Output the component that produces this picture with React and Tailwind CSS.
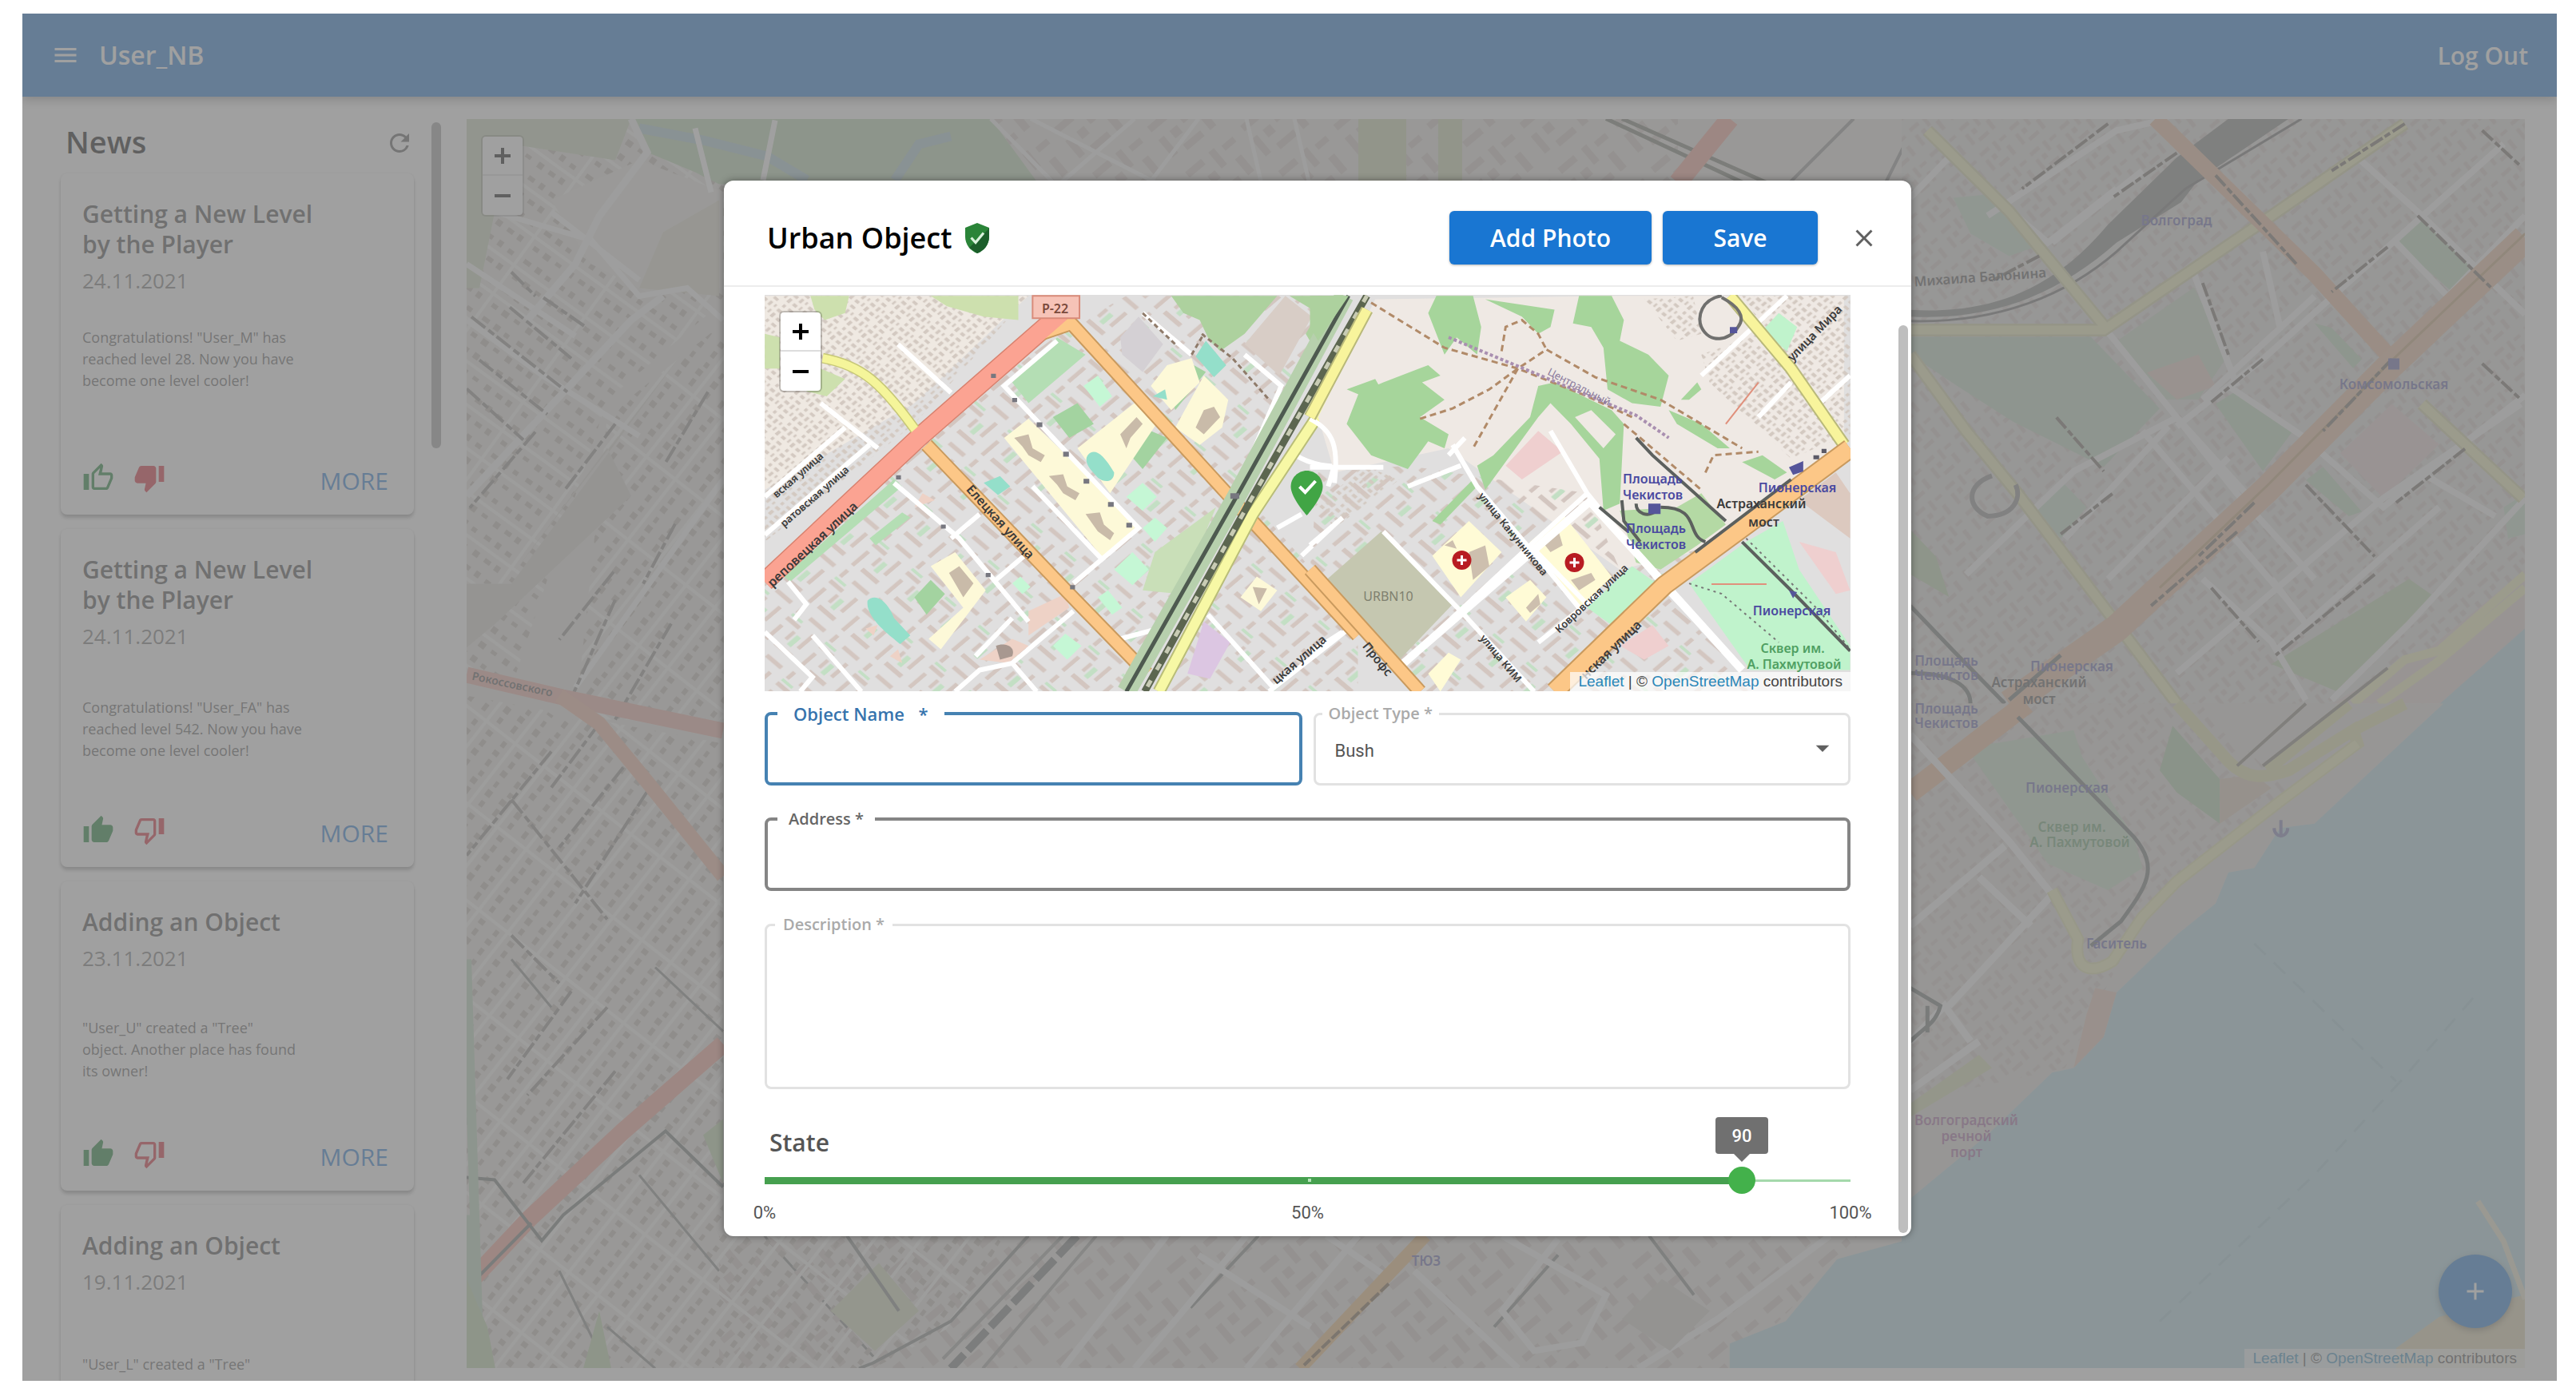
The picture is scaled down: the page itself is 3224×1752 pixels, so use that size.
import React, { useState } from 'react';
import {
  MdMenu,
  MdRefresh,
  MdClose,
  MdThumbUp,
  MdThumbDown,
  MdOutlineThumbUp,
  MdOutlineThumbDown,
  MdAdd,
  MdArrowDropDown,
} from 'react-icons/md';

const news = [
  {
    id: 1,
    title: 'Getting a New Level by the Player',
    date: '24.11.2021',
    text: 'Congratulations! "User_M" has\nreached level 28. Now you have\nbecome one level cooler!',
    vote: 'down',
    spacing: 'mt-[38px] mb-[86px]',
  },
  {
    id: 2,
    title: 'Getting a New Level by the Player',
    date: '24.11.2021',
    text: 'Congratulations! "User_FA" has\nreached level 542. Now you have\nbecome one level cooler!',
    vote: 'up',
    spacing: 'mt-14 mb-16',
  },
  {
    id: 3,
    title: 'Adding an Object',
    date: '23.11.2021',
    text: '"User_U" created a "Tree"\nobject. Another place has found\nits owner!',
    vote: 'up',
    spacing: 'mt-[54px] mb-[68px]',
  },
  {
    id: 4,
    title: 'Adding an Object',
    date: '19.11.2021',
    text: '"User_L" created a "Tree"',
    spacing: 'mt-[70px] mb-16',
  },
];

const NewsCard = ({ item }) => (
  <article className="shrink-0 rounded-lg bg-white pt-8 pr-8 pb-6 pl-[27px] shadow-[0_4px_4px_rgba(0,0,0,0.35),0_0_3px_rgba(0,0,0,0.12)]">
    <h3 className="w-[300px] text-[30px] leading-[38px] font-semibold text-[#404040]">{item.title}</h3>
    <p className="mt-1.5 text-[26px] leading-10 text-[#707070]">{item.date}</p>
    <p className={`text-[18px] leading-[27px] whitespace-pre-line text-[#555] ${item.spacing}`}>{item.text}</p>
    {item.vote && (
      <div className="flex h-11 items-center">
        <button aria-label="Like" className="text-[#0b7a24]">
          {item.vote === 'up' ? <MdThumbUp className="size-10" /> : <MdOutlineThumbUp className="size-10" />}
        </button>
        <button aria-label="Dislike" className="ml-6 text-[#d81b2a]">
          {item.vote === 'down' ? <MdThumbDown className="size-10" /> : <MdOutlineThumbDown className="size-10" />}
        </button>
        <button className="mt-2 ml-auto text-[30px] leading-10 text-[#1976d2]">MORE</button>
      </div>
    )}
  </article>
);

const ZoomControl = () => (
  <div className="absolute top-[22px] left-5 flex w-[50px] flex-col rounded-sm bg-white text-black shadow-[0_0_0_2px_rgba(0,0,0,0.2)]">
    <button aria-label="Zoom in" className="flex h-[49px] items-center justify-center border-b-2 border-[#ddd]">
      <svg viewBox="0 0 22 22" className="size-[22px]" stroke="currentColor" strokeWidth="4">
        <path d="M11 1v20M1 11h20" />
      </svg>
    </button>
    <button aria-label="Zoom out" className="flex h-[49px] items-center justify-center">
      <svg viewBox="0 0 22 22" className="size-[22px]" stroke="currentColor" strokeWidth="4">
        <path d="M1 11h20" />
      </svg>
    </button>
  </div>
);

const Attribution = () => (
  <p className="absolute right-0 bottom-0 bg-white/70 px-2.5 font-['Liberation_Sans',sans-serif] text-[19px] leading-6 text-[#444]">
    <a href="#leaflet" className="text-[#2a86b8]">Leaflet</a> | © <a href="#osm" className="text-[#2a86b8]">OpenStreetMap</a> contributors
  </p>
);

const CityMap = () => (
  <svg
    viewBox="584 148 2576 1564"
    preserveAspectRatio="xMidYMid slice"
    className="absolute inset-0 size-full [&_path]:[vector-effect:non-scaling-stroke]"
    aria-hidden="true"
    fill="none"
  >
    <defs>
      <pattern id="suburb" width="96" height="46" patternUnits="userSpaceOnUse" patternTransform="rotate(-52)">
        <path d="M0 23H96M48 0V46" stroke="#f3f2f0" strokeWidth="4" />
        <path d="M4 8h9v6h-9zM20 7h7v8h-7zM34 9h8v6h-8zM56 8h10v6h-10zM72 6h8v8h-8zM85 9h7v6h-7zM5 31h8v8h-8zM19 33h9v6h-9zM35 31h7v8h-7zM55 33h8v6h-8zM70 31h9v8h-9zM85 33h8v5h-8z" fill="#bdb5ad" />
      </pattern>
      <pattern id="suburbWest" width="110" height="44" patternUnits="userSpaceOnUse" patternTransform="rotate(36)">
        <path d="M0 22H110M55 0V44" stroke="#f3f2f0" strokeWidth="4" />
        <path d="M5 7h9v6h-9zM22 6h7v8h-7zM38 8h8v6h-8zM62 7h10v6h-10zM80 6h8v8h-8zM96 8h7v6h-7zM5 30h8v8h-8zM22 31h9v6h-9zM38 30h7v8h-7zM62 31h8v6h-8zM78 30h9v8h-9zM96 31h8v5h-8z" fill="#bdb5ad" />
      </pattern>
      <pattern id="downtown" width="90" height="74" patternUnits="userSpaceOnUse" patternTransform="rotate(-40)">
        <path d="M8 8h26v9H8zM46 8h9v26h-9zM64 12h18v8H64zM8 30h9v28H8zM26 30h12v12H26zM28 54h28v9H28zM66 36h10v26H66z" fill="#cdc4be" />
      </pattern>
    </defs>
    <rect x="584" y="148" width="2576" height="1564" fill="#e3e0da" />
    <path d="M584 148H960V860L780 900L584 850Z" fill="url(#suburbWest)" />
    <path d="M584 870L905 930V1712H584Z" fill="url(#suburb)" />
    <path d="M760 500L960 330V900H700L640 860Z" fill="#e3e0da" />
    <path d="M760 520L960 360V900H720Z" fill="url(#suburb)" />
    <path d="M690 250L800 200L905 240V360L810 365L740 330Z" fill="#e7e4de" />
    <path d="M830 290L900 250V370L800 360Z" fill="#dad8c6" />
    <path d="M855 440L640 720L760 560L790 620L620 780L584 810V730L640 730Z" fill="#d3d0c8" />
    <path d="M584 148H790L770 200L640 180L620 260L600 360H584Z" fill="#c6d3b6" />
    <path d="M790 148H1240L1300 230H900L870 215L810 190Z" fill="#b4d1aa" />
    <path d="M800 160L880 175L960 195L1010 225M1120 225L1150 180L1190 170" stroke="#a5c6cf" strokeWidth="12" />
    <path d="M970 150L955 225M870 160L890 240" stroke="#fff" strokeWidth="7" />
    <path d="M1240 148H2100V230H1300Z" fill="url(#downtown)" />
    <path d="M1240 148L1330 240M1290 148L1460 235M1420 148L1320 235M1500 148L1430 240M1560 148L1580 235M1620 148L1640 235" stroke="#f4f4f4" strokeWidth="5" />
    <path d="M1700 148h60v80h-60zM1800 148h30v80h-30z" fill="#c5d3a8" />
    <path d="M2010 148L2190 232M2030 148L2220 232" stroke="#6f7568" strokeWidth="5" />
    <path d="M2165 148L2100 228" stroke="#f29c8b" strokeWidth="24" />
    <path d="M2320 148L2240 228M2400 148L2360 228" stroke="#8b8b8b" strokeWidth="4" />

    {/* main streets west of the center */}
    <path d="M584 400L680 470L800 545M584 330L720 420M610 262L740 300L800 370L860 360L905 400M690 265L800 350M905 600L720 860" stroke="#f7f7f7" strokeWidth="7" />
    <path d="M790 148L810 190L750 270L720 330L660 400M584 620L790 400L830 370" stroke="#f2f2f2" strokeWidth="9" />
    <path d="M640 340L670 370M680 372L735 410M638 384L715 448M590 396L710 490M600 450L685 518M584 486L655 550M670 540L588 635M770 530L705 615M886 490L832 580M845 655L805 730M768 715L700 800M770 750L712 880M840 780L770 900M750 905L690 985M690 940L584 1070M780 960L700 1060M640 1000L760 1150M810 990L720 1130M640 1170L700 1230M715 1240L635 1350M760 1260L660 1370M770 1340L655 1480" stroke="#8a8782" strokeWidth="4" strokeDasharray="22 5 9 4" />
    <path d="M584 844L704 872L905 914" stroke="#eba79a" strokeWidth="20" />
    <path d="M700 870L750 905L810 978L905 1096" stroke="#efb096" strokeWidth="18" />
    <path d="M905 1306L780 1415L663 1524L584 1608" stroke="#f29c8b" strokeWidth="22" />
    <path d="M584 1473L619 1476L678 1552L705 1520L833 1415L905 1485M584 1612L665 1530" stroke="#69716e" strokeWidth="4" />
    <path d="M640 1200L690 1260M820 1210L905 1290M800 1470L900 1590M700 1590L760 1712M760 1660L820 1712M905 1480L960 1550L1093 1697" stroke="#7f8280" strokeWidth="3" />
    <path d="M584 1200L600 1712M590 1520V1640" stroke="#b5d3b8" strokeWidth="12" />
    <path d="M750 1640L765 1712H730ZM880 1420L905 1400V1480ZM584 1600L610 1660L620 1712H584Z" fill="#b7d2a5" />

    {/* bottom strip */}
    <path d="M900 1540H2330L2239 1640L2166 1712H900Z" fill="url(#downtown)" />
    <path d="M900 1540H1260L1190 1660L1093 1712H900Z" fill="url(#suburb)" />
    <path d="M1040 1640L1100 1580L1150 1640L1095 1690Z" fill="#cdd6b4" />
    <path d="M1287 1546L1190 1653L1093 1705L1075 1712M1060 1546L1125 1640M1575 1546L1490 1636M1950 1570L1870 1660M2064 1546L2120 1620" stroke="#7b807e" strokeWidth="4" />
    <path d="M1348 1546L1190 1712" stroke="#6f7473" strokeWidth="10" strokeDasharray="34 7" />
    <path d="M1372 1546L1230 1712M1330 1546L1180 1700" stroke="#9a9c98" strokeWidth="4" />
    <path d="M1460 1546L1330 1712M1560 1546L1420 1712M1500 1570L1640 1660M1700 1546L1560 1712M1770 1590L1900 1712M1880 1546L2010 1620L1980 1680L1920 1690L1880 1640L1950 1550M2290 1546L2150 1650L2050 1712M1660 1546L1740 1600" stroke="#f4f4f4" strokeWidth="8" />
    <path d="M1784 1546L1742 1590L1627 1712" stroke="#eab676" strokeWidth="16" />
    <path d="M1738 1606L1632 1708" stroke="#705a3c" strokeWidth="4" strokeDasharray="14 3" />
    <path d="M2080 1600L2140 1640L2090 1690L2030 1650Z" fill="#cfcbc4" />

    {/* historic center, north-east */}
    <g transform="translate(2380 0) scale(0.5382 0.5612)">
      <path d="M0 264H1450V1570H0Z" fill="#dcd9d6" />
      <path d="M0 264H1450V1570H0Z" fill="url(#downtown)" />
      <path d="M120 440L230 430L310 550L250 570L160 520Z" fill="#bfdcc4" />
      <path d="M20 750H440L600 910L470 1040L260 940L130 860L20 790Z" fill="#b9d4ba" />
      <path d="M500 760L680 640L760 790L690 890L610 890Z" fill="#c3d8be" />
      <path d="M570 830L690 790L730 860L640 890Z" fill="#e4c6bd" />
      <path d="M730 900L780 870L910 960L840 1050ZM1150 540L1210 490L1340 610L1280 650ZM960 720L1000 730L1070 800L1050 820ZM940 1070L980 1040L1070 1140L1040 1150Z" fill="#b9d6b6" />
      <path d="M20 1180L80 1240L110 1330L20 1280ZM860 1480L1180 1290L1240 1330L1010 1540Z" fill="#b9d3a9" />
      <path d="M1020 1010L1140 900L1250 990L1120 1110Z" fill="#e2cccb" />
      <path d="M310 1130L370 1070L430 1130L370 1200ZM1400 1130L1450 1100V1190L1410 1200Z" fill="#bfdcc4" />
      <path d="M200 480L500 290L620 264M20 440L120 340M230 450L340 540L500 420M350 540L560 380M480 740L640 930L780 1100L960 1290M640 950L840 800L1200 490L1400 320M700 890L960 660M760 860L930 970L1120 1130L1450 880M840 560L880 730M1060 350L1210 480L1450 700M150 1280L400 1050L640 930L820 1120M380 1200L620 950M480 1290L760 1020M640 1500L1120 1110L1440 900M700 1290L860 1430L940 1560M860 1290L940 1390M870 1450L1250 1130M1140 1100L1220 1060L1380 1150M680 610L780 860M560 960L900 1340M1150 540L1270 660L1450 480M1000 1560L1180 1390L1450 1110" stroke="#f3f3f3" strokeWidth="8" />
      <path d="M900 264L760 264L640 350L480 500C350 650 200 700 20 690V705C220 715 370 650 500 540L650 450L690 400Z" fill="#7d7f7c" />
      <path d="M930 264L660 420L500 560C380 660 220 720 20 715" stroke="#666" strokeWidth="3" />
      <path d="M60 290L250 470L470 725M20 735H470L830 500L1170 275M20 790L150 960L270 1100L500 1390L640 1568M1210 900L1445 1110" stroke="#cfcf9d" strokeWidth="16" />
      <path d="M60 290L250 470L470 725M20 735H470L830 500L1170 275M20 790L150 960L270 1100L500 1390L640 1568M1210 900L1445 1110" stroke="#ebebb0" strokeWidth="11" />
      <path d="M590 264L960 610L1140 800" stroke="#e8b592" strokeWidth="20" />
      <path d="M1450 530L1130 820L850 1090L500 1400L250 1568" stroke="#e6b896" strokeWidth="34" />
      <path d="M1450 520L1130 812L850 1082L600 1310" stroke="#c09c6e" strokeWidth="3" />
      <path d="M730 390L920 590M1140 800L980 960M820 1120L690 1240M780 1185L580 1350M1170 275L1000 380M1130 550L1000 650M700 630L760 790M840 800L715 900M490 1100L370 1190M360 930L470 1050M1200 480L1370 640M1350 810L1440 890M1310 1000L1150 1120M940 1080L1100 1240M1100 1280L870 1460M720 1310L830 1430M1350 290L1440 370M480 275L280 420M640 340L490 440M320 570L210 625" stroke="#6d655b" strokeWidth="4" strokeDasharray="18 4 8 3" />
      <path d="M210 1060C150 1080 150 1130 200 1150C260 1150 280 1110 265 1080" stroke="#858585" strokeWidth="6" />
      <path d="M20 1350L120 1450L240 1568M370 1460L250 1560M20 1500C120 1500 160 1530 160 1568" stroke="#666c6a" strokeWidth="5" />
      <path d="M1450 1270L1220 1450L1000 1568H1290L1450 1410Z" fill="#e0cfcb" />
      <path d="M1450 1280L1250 1450L1170 1470L1050 1568M1450 1310L1240 1480L1110 1568" stroke="#e9ebae" strokeWidth="11" />
      <path d="M1450 1400L1250 1570H1450Z" fill="#aad3df" />
    </g>

    {/* embankment and the river */}
    <g transform="translate(2380 880) scale(0.5382 0.5562)">
      <path d="M0 0H1260L960 270L880 280L820 370L760 380L730 450L640 520L500 650L470 750L400 820L350 830L200 970L0 1130Z" fill="#dcd7d2" />
      <path d="M0 0H700L900 200L560 480L380 820L0 900Z" fill="url(#downtown)" />
      <path d="M630 50L740 170V270L640 200L600 150Z" fill="#a9cba2" />
      <path d="M150 100L400 60L420 120L540 300L560 370L480 420L340 360Z" fill="#bfdcc0" />
      <path d="M20 900L180 790L210 820L20 930Z" fill="#cfd6a8" />
      <path d="M740 170L820 160L860 190L740 270Z" fill="#d8c3ae" />
      <path d="M450 640L500 650L470 750L400 820L430 700Z" fill="#e3bfae" />
      <path d="M290 0L20 200" stroke="#e9b38b" strokeWidth="26" />
      <path d="M20 70L250 310L350 430M20 500L240 320M110 680L350 430M180 390L300 500M20 760L100 680L160 760M20 870L180 760" stroke="#f3f3f3" strokeWidth="9" />
      <path d="M270 30L430 190L540 300C600 370 570 410 510 490L440 545M20 640L90 680C80 720 50 730 20 760M60 680V740" stroke="#666b6a" strokeWidth="5" />
      <path d="M350 420L410 530C400 600 440 610 490 580L560 480L640 400L880 220L1060 90L1050 60L900 150C840 170 800 170 760 130L640 0M1170 0L1050 60M1040 0L850 150" stroke="#d9dba0" strokeWidth="15" />
      <path d="M350 420L410 530C400 600 440 610 490 580L560 480L640 400L880 220L1060 90" stroke="#e9ebae" strokeWidth="11" />
      <path d="M1130 -80L840 140M780 140L940 0" stroke="#817b70" strokeWidth="4" />
      <path d="M1260 0L960 270L880 280L820 370L760 380L730 450L640 520L500 650L470 750L400 820L350 830L200 970L0 1130V1210L-150 1250L-270 1390L-400 1440V1500H1450V-10H1270Z" fill="#aad3df" />
      <path d="M882 262V298M866 280C868 304 896 304 898 280" stroke="#7979b0" strokeWidth="4" />
      <path d="M600 1390L960 1060L1160 850L1340 650M820 540L1150 850" stroke="#9cc3cf" strokeWidth="3" strokeDasharray="20 14" />
      <path d="M1450 1330L1250 1380L1150 1450V1500H1450Z" fill="#dbd0a8" />
      <path d="M1340 1120L1400 1210L1450 1340" stroke="#e6e3c6" strokeWidth="7" />
    </g>

    <g className="font-['Noto_Sans',sans-serif] text-[17px] font-semibold" fill="#5d5da8" textAnchor="middle">
      <text x="2724" y="281">Волгоград</text>
      <text x="2996" y="486">Комсомольская</text>
      <text x="2593" y="839">Пионерская</text>
      <text x="2587" y="991">Пионерская</text>
      <text x="2436" y="832">Площадь</text>
      <text x="2436" y="850">Чекистов</text>
      <text x="2436" y="892">Площадь</text>
      <text x="2436" y="910">Чекистов</text>
      <text x="2649" y="1186">Гаситель</text>
      <text x="1785" y="1583">ТЮЗ</text>
      <g fill="#4a4a4a">
        <text x="2552" y="859">Астраханский</text>
        <text x="2552" y="880">мост</text>
        <text transform="translate(2396 358) rotate(-4)" textAnchor="start">Михаила Балонина</text>
        <text transform="translate(590 850) rotate(12)" textAnchor="start" className="text-[14px]">Рокоссовского</text>
      </g>
      <g fill="#5f9a68">
        <text x="2593" y="1040">Сквер им.</text>
        <text x="2603" y="1059">А. Пахмутовой</text>
      </g>
      <g fill="#a0629c">
        <text x="2461" y="1407">Волгоградский</text>
        <text x="2461" y="1427">речной</text>
        <text x="2461" y="1447">порт</text>
      </g>
    </g>
    <rect x="2989" y="448" width="14" height="14" fill="#5d5da8" />
  </svg>
);

const DistrictMap = () => (
  <svg
    viewBox="957 368 1360 496"
    preserveAspectRatio="xMidYMid slice"
    className="absolute inset-0 size-full [&_path]:[vector-effect:non-scaling-stroke]"
    aria-hidden="true"
    fill="none"
  >
    <defs>
      <pattern id="houses" width="58" height="50" patternUnits="userSpaceOnUse" patternTransform="rotate(-45)">
        <path d="M4 4h14v9H4zM26 5h9v13h-9zM44 6h9v8h-9zM6 22h9v12H6zM24 26h14v8H24zM46 24h8v14h-8zM8 41h12v6H8zM30 41h9v6h-9z" fill="#d3c9c1" />
      </pattern>
      <pattern id="flats" width="150" height="116" patternUnits="userSpaceOnUse" patternTransform="rotate(-45)">
        <path d="M6 8h56v11H6zM80 6h12v44H80zM112 10h26v11h-26zM8 38h13v56H8zM40 44h30v10H40zM42 84h54v11H42zM118 48h12v52h-12z" fill="#d3c6c0" />
        <path d="M32 60h36v14H32zM98 8h8v36h-8z" fill="#c3dfc4" />
      </pattern>
    </defs>
    <rect x="957" y="368" width="1360" height="496" fill="#e0dfdf" />

    {/* west half */}
    <g transform="translate(900 200) scale(0.5102 0.4337)">
      <path d="M113 390H760L480 700L113 950Z" fill="#efe9e2" />
      <path d="M113 390H760L480 760L113 1100Z" fill="url(#houses)" />
      <path d="M113 1200L490 800L870 470L1240 980L1000 1532H113Z" fill="url(#flats)" />
      <path d="M880 470L1000 390H1540L1250 980Z" fill="url(#flats)" />
      <path d="M1320 1000L1568 1330V1532H1090Z" fill="url(#flats)" />
      <path d="M225 390H320L310 440L260 460L235 430ZM520 390H735V460L650 450L560 420ZM250 600L310 630L265 680L215 665ZM113 500L150 510V600H113Z" fill="#cde0ae" />
      <path d="M1110 390H1370L1290 500L1230 550L1200 510L1180 460L1140 440ZM1400 390H1545L1470 560L1440 500L1470 440Z" fill="#add19e" />
      <path d="M1290 530L1390 390L1455 450L1375 620Z" fill="#d8cdc6" />
      <path d="M985 510L1030 450L1090 530L1040 610L990 560Z" fill="#d4d0d4" />
      <path d="M1070 1130L1220 1000L1130 1250L1040 1240Z" fill="#c9dfb8" />
      <path d="M160 1200L430 920L450 940L175 1215ZM370 1090L450 1015L470 1030L385 1110ZM720 640L830 510L900 560L760 700Z" fill="#b4deb4" />
      <path d="M820 740L880 700L920 760L860 800ZM1010 850L1060 780L1100 800L1040 890ZM1100 640L1150 580L1195 610L1120 720ZM480 1260L520 1210L555 1250L510 1310Z" fill="#a3d3a0" />
      <path d="M700 800L760 745L1030 1050L945 1150ZM880 830L1030 690L1085 740L960 960ZM1120 770L1190 620L1250 690L1235 770L1180 820ZM520 1170L580 1130L655 1240L545 1410L515 1380L600 1290ZM1320 1200L1370 1240L1330 1300L1280 1260ZM1060 650L1100 590L1160 570L1180 640L1110 720Z" fill="#fdf9d8" />
      <path d="M725 800L760 790L770 830L800 850L790 870L760 850L745 825ZM810 910L845 905L855 940L885 960L875 980L845 960L830 935ZM900 1020L935 1015L945 1050L970 1075L960 1095L930 1070L915 1045ZM1190 720L1215 710L1230 740L1190 790L1170 770ZM565 1190L590 1170L625 1220L600 1260ZM985 790L1025 740L1040 760L1010 800L1000 830ZM1310 1230L1345 1235L1325 1280Z" fill="#c9bba9" />
      <path d="M1170 565L1195 520L1245 590L1215 625ZM905 850C920 830 940 840 970 900C970 930 945 930 930 915C910 890 895 870 905 850ZM365 1270C380 1250 410 1260 430 1320L470 1370L445 1395C420 1370 360 1320 365 1270ZM650 930L690 910L715 940L685 965ZM1065 680L1095 660L1100 690Z" fill="#94dfca" />
      <path d="M1000 970L1040 930L1075 970L1040 1010ZM1040 1060L1070 1030L1100 1060L1070 1100ZM970 1180L1015 1130L1055 1180L1015 1225ZM930 1260L955 1240L990 1290L965 1310ZM820 1400L850 1365L890 1400L855 1440ZM895 650L930 620L965 680L935 710ZM720 1220L740 1200L765 1230L745 1250Z" fill="#c5f7d5" />
      <path d="M1150 1480L1190 1330L1255 1390L1205 1495Z" fill="#dcc6e2" />
      <path d="M640 1440L720 1380L760 1400L710 1450ZM360 1350L390 1340L380 1370ZM420 1430L440 1410L450 1450ZM480 1000L500 960L530 980ZM760 1300L850 1250L860 1290L760 1370Z" fill="#eed2c6" />
      <path d="M1568 1170L1480 1230L1568 1330Z" fill="#c5c7b0" />
      <path d="M440 530L570 670M250 700L390 830M310 770L113 970M370 820L113 1080M830 520L700 650L860 850L1030 1060L940 1150L770 940M430 930L590 1090L760 1330M570 1090L640 1020M680 1210L760 1130M940 1150L870 1220M870 1300L720 1450L640 1470L580 1532M720 1450L780 1532M720 1320L630 1430M170 1215L215 1280L185 1325M113 1360L230 1490L200 1532M230 1370L350 1532M1200 1310L1360 1520M1568 1330L1350 1532M1290 560L1380 650L1270 950M1460 750C1530 790 1520 850 1495 940M1415 850C1470 890 1520 880 1568 885M1370 1060L1430 1020M1430 1140L1520 1040M985 1380L1080 1350M1160 560L1040 440" stroke="#ffffff" strokeWidth="6" />
      <path d="M1185 500L1260 570L1350 690M1040 440L1120 530M1160 560L1190 500" stroke="#8f7b6a" strokeWidth="3" strokeDasharray="6 4" />
      <path d="M113 1215L490 800L840 440" stroke="#d8826f" strokeWidth="25" />
      <path d="M255 570C350 590 400 640 490 790" stroke="#c6c777" strokeWidth="13" />
      <path d="M255 570C350 590 400 640 490 790" stroke="#f5f59a" strokeWidth="10" />
      <path d="M790 500L865 470L1250 965L1568 1370M510 820L860 1250L1050 1480" stroke="#c99a5e" strokeWidth="18" />
      <path d="M790 500L865 470L1250 965L1568 1370M510 820L860 1250L1050 1480" stroke="#fcc787" strokeWidth="14" />
      <path d="M113 1215L490 800L840 440" stroke="#fba392" strokeWidth="22" />
      <path d="M1568 560L1310 1020L1080 1532" stroke="#b9bd78" strokeWidth="16" />
      <path d="M1568 560L1310 1020L1080 1532" stroke="#f7f8a5" strokeWidth="12" />
      <path d="M1535 390L1270 970L1000 1532" stroke="#b7d0ad" strokeWidth="24" />
      <path d="M1545 390L1270 970L1000 1532" stroke="#4e5a50" strokeWidth="5" />
      <path d="M1590 390L1300 990L1045 1532" stroke="#5c6650" strokeWidth="9" />
      <path d="M1590 390L1300 990L1045 1532" stroke="#c8cbb4" strokeWidth="5" strokeDasharray="9 15" />
      <path d="M770 390H885V455H770Z" fill="#f6c3b7" stroke="#d98b7a" strokeWidth="2" />
      <path d="M780 755h14v14h-14zM845 840h14v14h-14zM895 918h14v14h-14zM955 985h14v14h-14zM1000 1045h14v14h-14zM720 685h12v12h-12zM668 615h12v12h-12zM435 908h12v12h-12zM545 1050h12v12h-12zM655 1190h12v12h-12zM862 1225h12v12h-12zM1255 960h22v16h-22z" fill="#77777f" />
      <path d="M680 1400C700 1390 730 1400 720 1430L690 1440Z" fill="#a89890" />
    </g>

    {/* east half */}
    <g transform="translate(1640 200) scale(0.5102 0.4337)">
      <path d="M160 400L760 390H1310V830L940 1130L760 1180L340 830L60 900L20 740Z" fill="#efe9e4" />
      <path d="M1060 390H1325V800L1180 600ZM960 560L1100 500L1300 800L1180 860L980 640ZM820 400L940 390L960 500L900 520Z" fill="url(#houses)" />
      <path d="M20 900L240 880L680 960L760 1180L960 1120L590 1532H260L0 1180Z" fill="url(#flats)" />
      <path d="M870 1250L1100 1532H600Z" fill="url(#flats)" />
      <path d="M130 880L220 920L60 1060L20 1000Z" fill="url(#houses)" />
      <path d="M0 390H95L20 520L0 480Z" fill="#add19e" />
      <path d="M310 390H400L420 480L410 560L360 510L330 560L290 440ZM430 400L600 430L590 480L560 500L520 450ZM660 390H740L770 460L760 520L830 560L880 620L860 710L790 700L730 660L720 540L690 480L645 470Z" fill="#a6d59b" />
      <path d="M290 590L320 620L275 640L330 690L270 740L340 790L330 830L290 810L240 890L150 850L90 760L120 670L180 640ZM90 660L160 630L170 650L120 675ZM560 650L600 640L740 720L770 760L760 990L720 1010L710 860L640 760L590 700L560 740L430 950L410 880L450 850L540 740ZM880 720L960 760L1030 830L1000 830L900 760ZM910 690L950 640L960 660L930 690ZM1060 870L1110 850L1170 900L1140 920ZM300 1040L400 920L410 940L320 1050Z" fill="#a6d59b" />
      <path d="M650 740L720 830L750 790L690 720Z" fill="#efe9e4" />
      <path d="M760 1010L900 1000L960 960L1020 1050L950 1110L860 1180L800 1160Z" fill="#b4d9a4" />
      <path d="M40 1210L175 1070L350 1280L220 1440Z" fill="#c5c7b0" />
      <path d="M1110 490L1150 440L1195 480L1170 550ZM680 1290L790 1170L850 1220L740 1340ZM930 1220L1070 1100L1160 1040L1200 1180L1325 1400V1470H1080Z" fill="#c0f3cc" />
      <path d="M1200 1100L1290 1130L1325 1240L1290 1250ZM760 1400L840 1340L880 1400L820 1440ZM480 880L560 780L620 840L520 920Z" fill="#efcfcf" />
      <path d="M1200 980L1290 900L1325 960V1090Z" fill="#dcc9bf" />
      <path d="M300 1140L390 1040L470 1130L370 1260ZM540 1100L620 1020L740 1200L660 1290ZM480 1260L540 1210L580 1260L530 1330ZM290 1480L340 1420L370 1440L320 1532Z" fill="#fffbd6" />
      <path d="M330 1110L350 1095L360 1120ZM390 1130L430 1110L440 1170L400 1210ZM570 1100L610 1070L620 1110L590 1130ZM640 1210L690 1190L700 1210L660 1240ZM530 1290L560 1250L565 1280L540 1305Z" fill="#cdbfae" />
      <path d="M0 745C60 780 70 830 60 930M0 885H180M350 820L410 940L590 1190L660 1290M340 850L380 800M590 780L680 960L540 1110L230 1450M680 960L860 1220L1060 1470M960 620L1170 390M1250 700L1325 620M1100 740L1180 640M560 1390L710 1250M370 1300L550 1532M180 1070L370 1300M240 940L370 880M540 1110L680 1280M0 1110L80 1030M0 1420L80 1360" stroke="#fff" strokeWidth="6" />
      <path d="M230 1450L680 990M680 975L1060 1470" stroke="#fff" strokeWidth="10" />
      <path d="M270 745L350 715L440 660L510 600L580 545L700 625L860 690L960 760L1060 830M470 550L480 480L520 460L560 500L580 545M510 600L400 830M150 410L330 540L510 600L680 680L790 740M770 760L960 950M970 900L990 850L1100 840" stroke="#b18a68" strokeWidth="3" strokeDasharray="8 5" />
      <path d="M340 510L800 735L880 800" stroke="#a98fb0" strokeWidth="4" strokeDasharray="4 3" />
      <path d="M930 1220L1010 1250L1150 1390M1070 1090L1250 1300L1325 1410" stroke="#777" strokeWidth="2" strokeDasharray="3 5" />
      <path d="M985 1222H1120M1020 760L1100 640" stroke="#e0907c" strokeWidth="2" />
      <path d="M140 430L0 740M1030 390L1180 600L1310 820" stroke="#b9b97a" strokeWidth="16" />
      <path d="M140 430L0 740M1030 390L1180 600L1310 820" stroke="#f8f49c" strokeWidth="12" />
      <path d="M600 1532L870 1225L1130 1000L1325 830" stroke="#c99a5e" strokeWidth="25" />
      <path d="M600 1532L870 1225L1130 1000L1325 830" stroke="#fcc787" strokeWidth="21" />
      <path d="M0 1180L270 1532" stroke="#c99a5e" strokeWidth="18" />
      <path d="M0 1180L270 1532" stroke="#fcc787" strokeWidth="14" />
      <path d="M800 800L840 850L1020 1040M945 1130L1180 920M765 980L770 1040L810 1100M800 990C800 1020 830 1030 850 1010M860 1000C960 1000 920 1080 970 1100M710 1000L780 1070M1060 1100L1180 1240L1325 1415" stroke="#5c605e" strokeWidth="4" />
      <path d="M1010 390C960 400 950 450 960 480C980 530 1030 520 1050 480C1070 450 1050 420 1010 395" stroke="#70706e" strokeWidth="4" />
      <path d="M830 990h30v30h-30zM1175 885l35-18v30l-25 10zM1030 480h18v18h-18zM1175 1240l20 5-10 18z" fill="#55559a" />
      <path d="M1235 850h14v12h-14zM1255 832h12v12h-12z" fill="#5b5a66" />
    </g>

    <g className="font-['Noto_Sans',sans-serif] text-[16px] font-semibold" fill="#3b3b3b">
      <text x="1321" y="391" textAnchor="middle" fill="#7a4a3c">Р-22</text>
      <text transform="translate(1209 612) rotate(48)">Елецкая улица</text>
      <text transform="translate(1075 634) rotate(-43)" textAnchor="end">реповецкая улица</text>
      <text transform="translate(1032 571) rotate(-41)" textAnchor="end" className="text-[13px]">вская улица</text>
      <text transform="translate(1064 588) rotate(-41)" textAnchor="end" className="text-[13px]">ратовская улица</text>
      <text transform="translate(1598 856) rotate(-41)" className="text-[15px]">цкая улица</text>
      <text transform="translate(1705 808) rotate(51)" className="text-[15px]">Профс</text>
      <text transform="translate(2056 782) rotate(-44)" textAnchor="end">нская улица</text>
      <text transform="translate(2244 452) rotate(-46)" className="text-[15px]">улица Мира</text>
      <text transform="translate(1850 620) rotate(51)" className="text-[13px]">улица Канунникова</text>
      <text transform="translate(1952 792) rotate(-43)" className="text-[13px]">Ковровская улица</text>
      <text transform="translate(1852 798) rotate(50)" className="text-[13px]">улица КИМ</text>
      <text x="1738" y="751" textAnchor="middle" fill="#7f806f" className="font-normal">URBN10</text>
      <g textAnchor="middle">
        <text x="2205" y="635">Астраханский</text>
        <text x="2208" y="658">мост</text>
        <g fill="#4a4aa0">
          <text x="2069" y="604">Площадь</text>
          <text x="2069" y="624">Чекистов</text>
          <text x="2073" y="666">Площадь</text>
          <text x="2073" y="686">Чекистов</text>
          <text x="2250" y="615">Пионерская</text>
          <text x="2243" y="769">Пионерская</text>
        </g>
        <g fill="#4f9f62">
          <text x="2244" y="816">Сквер им.</text>
          <text x="2246" y="836">А. Пахмутовой</text>
        </g>
        <text transform="translate(1975 487) rotate(27)" fill="#8a7a9c" className="text-[13px] font-normal">Центральный</text>
      </g>
    </g>

    {/* hospitals */}
    <circle cx="1830" cy="700" r="12" fill="#b81c22" />
    <circle cx="1971" cy="703" r="12" fill="#b81c22" />
    <path d="M1824 700h12M1830 694v12M1965 703h12M1971 697v12" stroke="#fff" strokeWidth="3" />

    {/* object marker */}
    <path d="M1636 588c-11 0-20 9-20 20 0 14 20 36 20 36s20-22 20-36c0-11-9-20-20-20z" fill="#41a545" />
    <path d="M1627 608l7 7 13-14" stroke="#fff" strokeWidth="4" />
  </svg>
);

const VerifiedShield = () => (
  <svg viewBox="0 0 32 38" className="ml-4 h-[38px] w-8" aria-hidden="true">
    <path d="M16 0L1 6v11c0 10 6.500 18 15 21 8.500-3 15-11 15-21V6z" fill="#2a8438" />
    <path d="M31 6v11c0 10-6.500 18-15 21L6 31 30 8z" fill="#1b5e2a" />
    <path d="M8.500 18.500l5.500 6 10-12" fill="none" stroke="#d9f2dc" strokeWidth="3.200" />
  </svg>
);

const Field = ({ id, label, borderClass, labelClass, legendClass, className = '', children }) => (
  <fieldset className={`min-w-0 rounded-lg ${borderClass} ${className}`}>
    <legend className={`leading-5 ${legendClass}`}>
      <label htmlFor={id} className={`block font-semibold ${labelClass}`}>{label}</label>
    </legend>
    {children}
  </fieldset>
);

const StateSlider = ({ value, onChange }) => (
  <div>
    <label htmlFor="state" className="block pl-1.5 text-[30px] leading-10 font-semibold text-[#555]">State</label>
    <div className="relative mt-2.5 flex h-[34px] items-center">
      <div className="h-[9px] bg-[#46a04f]" style={{ width: `${value}%` }} />
      <div className="h-[3px] flex-1 bg-[#a5d9ab]" />
      <span className="absolute left-1/2 size-1 bg-[#b6e3ba]" />
      <input
        id="state"
        type="range"
        min="0"
        max="100"
        value={value}
        onChange={(e) => onChange(Number(e.target.value))}
        className="absolute -left-[17px] h-[34px] w-[calc(100%+34px)] appearance-none bg-transparent [&::-webkit-slider-thumb]:size-[34px] [&::-webkit-slider-thumb]:appearance-none [&::-webkit-slider-thumb]:rounded-full [&::-webkit-slider-thumb]:bg-[#43b14b]"
      />
      <output
        htmlFor="state"
        className="absolute bottom-[50px] flex h-[46px] w-[66px] -translate-x-1/2 items-center justify-center rounded-sm bg-[#707070] font-['Roboto',sans-serif] text-[22px] font-medium text-white after:absolute after:top-full after:border-x-[10px] after:border-t-[10px] after:border-x-transparent after:border-t-[#707070]"
        style={{ left: `${value}%` }}
      >
        {value}
      </output>
    </div>
    <div className="-mx-10 mt-2.5 flex justify-between font-['Roboto',sans-serif] text-[22px] leading-7 text-[#555]">
      <span className="w-20 text-center">0%</span>
      <span className="w-20 text-center">50%</span>
      <span className="w-20 text-center">100%</span>
    </div>
  </div>
);

const UrbanObjectDialog = () => {
  const [name, setName] = useState('');
  const [type, setType] = useState('Bush');
  const [address, setAddress] = useState('');
  const [description, setDescription] = useState('');
  const [state, setState] = useState(90);

  return (
    <section role="dialog" aria-label="Urban Object" className="w-full max-w-[1486px] overflow-hidden rounded-xl bg-white shadow-[0_0_10px_rgba(0,0,0,0.4)]">
      <header className="flex items-center border-b-2 border-[#ececec] pt-[38px] pr-[41px] pb-[26px] pl-[54px]">
        <h2 className="text-[36px] leading-[66px] font-semibold text-black">Urban Object</h2>
        <VerifiedShield />
        <div className="ml-auto flex items-center gap-3.5">
          <button className="h-[67px] w-[253px] rounded-md bg-[#1976d2] text-[30px] font-semibold text-white shadow-[0_1px_3px_rgba(0,0,0,0.3)]">Add Photo</button>
          <button className="h-[67px] w-[194px] rounded-md bg-[#1976d2] text-[30px] font-semibold text-white shadow-[0_1px_3px_rgba(0,0,0,0.3)]">Save</button>
        </div>
        <button aria-label="Close" className="ml-10 text-[#606060]">
          <MdClose className="size-9" />
        </button>
      </header>

      <div className="flex">
        <form className="min-w-0 flex-1 pt-2.5 pr-[60px] pb-[15px] pl-[51px]" onSubmit={(e) => e.preventDefault()}>
          <div className="relative h-[496px] overflow-hidden">
            <DistrictMap />
            <ZoomControl />
            <Attribution />
          </div>

          <div className="mt-[18px] grid grid-cols-2 gap-3.5">
            <Field
              id="name"
              label={<>Object Name <span className="ml-3">*</span></>}
              className="h-[100px]"
              borderClass="border-4 border-[#4682b2]"
              labelClass="text-[22px] text-[#3673ad]"
              legendClass="ml-3 px-5"
            >
              <input id="name" required value={name} onChange={(e) => setName(e.target.value)} className="h-16 w-full bg-transparent px-6 text-2xl outline-none" />
            </Field>
            <Field
              id="type"
              label="Object Type *"
              className="relative h-[100px]"
              borderClass="border-[3px] border-[#e2e2e2]"
              labelClass="text-[20px] text-[#aaa]"
              legendClass="ml-2 px-2"
            >
              <select id="type" value={type} onChange={(e) => setType(e.target.value)} className="mt-1 h-16 w-full appearance-none bg-transparent px-6 font-['Roboto',sans-serif] text-[22px] text-[#555] outline-none">
                <option>Bush</option>
                <option>Tree</option>
              </select>
              <MdArrowDropDown className="pointer-events-none absolute right-3 bottom-6 size-10 text-[#606060]" />
            </Field>
          </div>

          <Field
            id="address"
            label="Address *"
            className="mt-8 h-[100px]"
            borderClass="border-4 border-[#858585]"
            labelClass="text-[20px] text-[#666]"
            legendClass="ml-3 px-3.5"
          >
            <input id="address" required value={address} onChange={(e) => setAddress(e.target.value)} className="h-16 w-full bg-transparent px-6 text-2xl outline-none" />
          </Field>

          <Field
            id="description"
            label="Description *"
            className="mt-8 mb-[47px] h-[216px]"
            borderClass="border-[3px] border-[#e2e2e2]"
            labelClass="text-[20px] text-[#aaa]"
            legendClass="ml-2.5 px-2.5"
          >
            <textarea id="description" required value={description} onChange={(e) => setDescription(e.target.value)} className="h-44 w-full resize-none bg-transparent px-6 text-2xl outline-none" />
          </Field>

          <StateSlider value={state} onChange={setState} />
        </form>
        <div className="mt-12 mr-1 mb-1 w-3 rounded-md bg-[#bebebe]" />
      </div>
    </section>
  );
};

const App = () => (
  <div className="h-screen bg-white pt-[17px] pr-6 pb-6 pl-7 font-['Open_Sans',sans-serif]">
    <div className="relative flex h-full flex-col overflow-hidden bg-white">
      <header className="z-0 flex h-[104px] shrink-0 items-center bg-[#1976d2] pr-9 pl-[36px] text-white shadow-[0_4px_12px_rgba(0,0,0,0.4)]">
        <button aria-label="Menu">
          <MdMenu className="size-9" />
        </button>
        <span className="ml-6 text-[32px] font-semibold">User_NB</span>
        <button className="ml-auto text-[30px] font-semibold">Log Out</button>
      </header>

      <div className="flex min-h-0 flex-1">
        <aside className="flex w-[556px] shrink-0 pl-12">
          <div className="flex w-[442px] flex-col gap-[18px] pt-7">
            <div className="flex h-[50px] shrink-0 items-center justify-between pt-1.5 pl-1.5">
              <h2 className="text-[38px] leading-[50px] font-semibold text-black">News</h2>
              <button aria-label="Refresh" className="pt-1 text-[#555]">
                <MdRefresh className="size-9" />
              </button>
            </div>
            {news.map((item) => (
              <NewsCard key={item.id} item={item} />
            ))}
          </div>
          <div className="mt-8 ml-[22px] h-[408px] w-3 rounded-md bg-[#9c9c9c]" />
        </aside>

        <main className="relative mt-7 mr-10 mb-4 flex-1 overflow-hidden">
          <CityMap />
          <ZoomControl />
          <Attribution />
          <button aria-label="Add object" className="absolute right-4 bottom-[50px] flex size-[92px] items-center justify-center rounded-full bg-[#1976d2] text-white shadow-[0_3px_8px_rgba(0,0,0,0.4)]">
            <MdAdd className="size-9" />
          </button>
        </main>
      </div>

      <div className="absolute inset-0 flex items-center justify-center bg-[#808080]/75 pt-7 pl-[70px]">
        <UrbanObjectDialog />
      </div>
    </div>
  </div>
);

export default App;
